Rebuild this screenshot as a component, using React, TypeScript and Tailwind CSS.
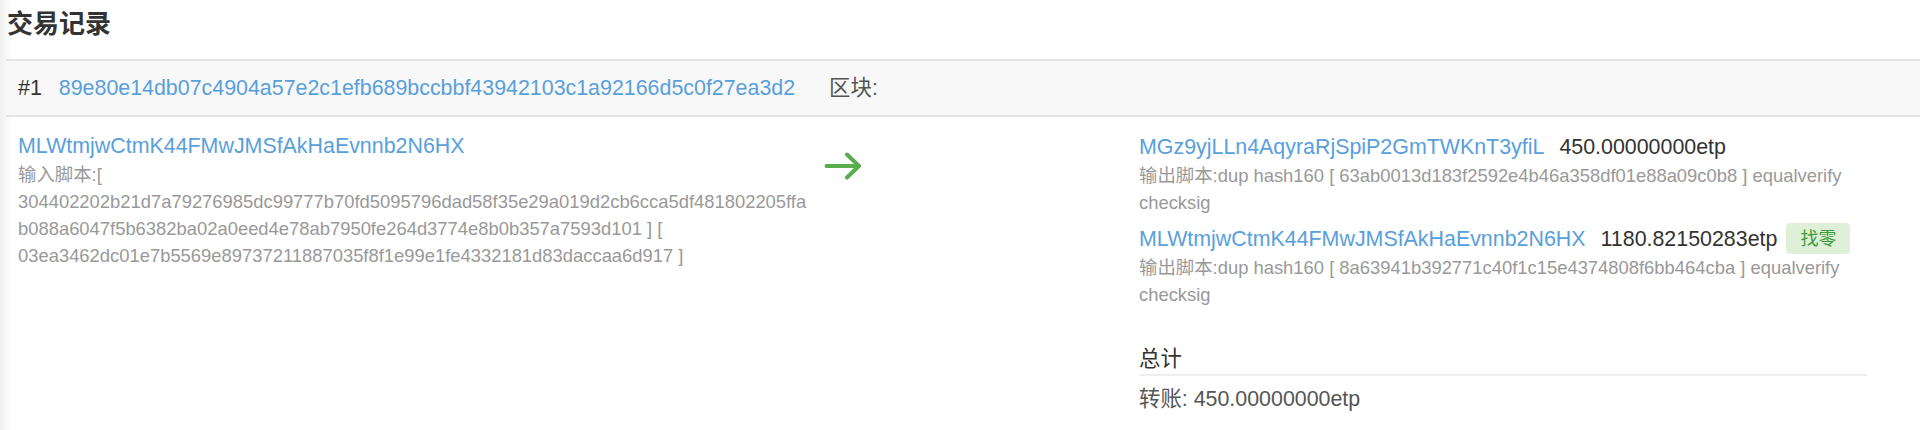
import React from "react";

type Output = {
  address: string;
  amount: string;
  script: string;
  change?: boolean;
};

const outputs: Output[] = [
  {
    address: "MGz9yjLLn4AqyraRjSpiP2GmTWKnT3yfiL",
    amount: "450.00000000etp",
    script: "输出脚本:dup hash160 [ 63ab0013d183f2592e4b46a358df01e88a09c0b8 ] equalverify checksig",
  },
  {
    address: "MLWtmjwCtmK44FMwJMSfAkHaEvnnb2N6HX",
    amount: "1180.82150283etp",
    script: "输出脚本:dup hash160 [ 8a63941b392771c40f1c15e4374808f6bb464cba ] equalverify checksig",
    change: true,
  },
];

const ArrowIcon = () => (
  <svg width="38" height="28" viewBox="0 0 38 28" fill="none">
    <path
      d="M2.5 14H35M23 2.5L35 14L23 25.5"
      stroke="#5aad4e"
      strokeWidth="4"
      strokeLinecap="round"
      strokeLinejoin="round"
    />
  </svg>
);

const App = () => {
  return (
    <div className="min-h-[430px] w-full bg-[linear-gradient(to_right,#f0f0f0,#ffffff_12px)] font-['Liberation_Sans','Noto_Sans_CJK_SC',sans-serif]">
      <h3 className="pl-[7px] pt-[9px] text-[26px] font-bold leading-[30px] text-[#333]">交易记录</h3>

      {/* tx header */}
      <div className="ml-[6px] mt-[20px] flex h-[58px] items-center border-y-2 border-[#e3e3e3] bg-[#f8f8f8] pl-[12px] text-[21.4px] leading-[30px]">
        <span className="text-[#333]">#1</span>
        <a className="ml-[17px] text-[#58a0dc]" href="#">
          89e80e14db07c4904a57e2c1efb689bccbbf43942103c1a92166d5c0f27ea3d2
        </a>
        <span className="ml-[34px] text-[#555]">区块:</span>
      </div>

      <div className="flex pl-[18px] pt-[14px]">
        {/* inputs */}
        <div className="w-[806px] shrink-0">
          <a className="block text-[21.4px] leading-[30px] text-[#58a0dc]" href="#">
            MLWtmjwCtmK44FMwJMSfAkHaEvnnb2N6HX
          </a>
          <div className="text-[18.4px] leading-[27px] text-[#999]">
            输入脚本:[
            <br />
            304402202b21d7a79276985dc99777b70fd5095796dad58f35e29a019d2cb6cca5df481802205ffa
            <br />
            b088a6047f5b6382ba02a0eed4e78ab7950fe264d3774e8b0b357a7593d101 ] [
            <br />
            03ea3462dc01e7b5569e89737211887035f8f1e99e1fe4332181d83daccaa6d917 ]
          </div>
        </div>

        <div className="mt-[21px] shrink-0">
          <ArrowIcon />
        </div>

        {/* outputs */}
        <div className="ml-[277px] w-[728px] shrink-0">
          {outputs.map((o, i) => (
            <div key={i} className={i > 0 ? "mt-[7px]" : ""}>
              <div className="flex h-[31px] items-center text-[21.4px] leading-[30px]">
                <a className="text-[#58a0dc]" href="#">
                  {o.address}
                </a>
                <span className="ml-[15px] text-[#333]">{o.amount}</span>
                {o.change && (
                  <span className="ml-[9px] flex h-[31px] items-center rounded-[4px] bg-[#dff0d8] px-[14px] text-[18px] text-[#3c9a3c]">
                    找零
                  </span>
                )}
              </div>
              <div className="text-[18.4px] leading-[27px] text-[#999]">{o.script}</div>
            </div>
          ))}

          <div className="mt-[36px]">
            <div className="border-b-2 border-[#efefef] text-[21.4px] leading-[30px] text-[#333]">总计</div>
            <div className="mt-[8px] text-[21.4px] leading-[30px] text-[#555]">转账: 450.00000000etp</div>
          </div>
        </div>
      </div>
    </div>
  );
};

export default App;
